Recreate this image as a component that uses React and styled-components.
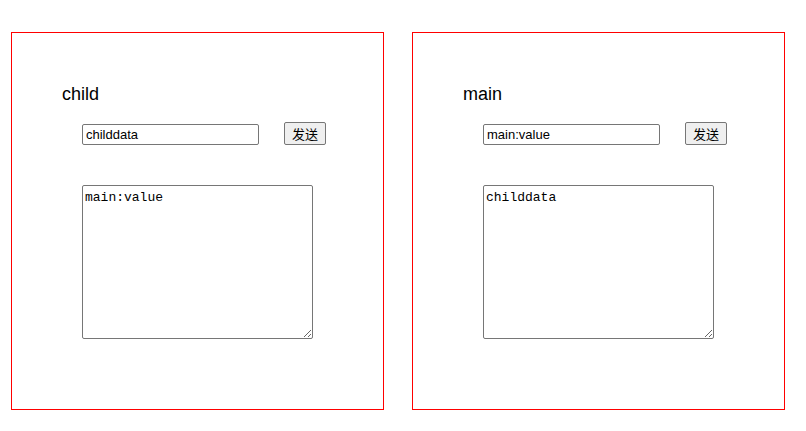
import styled, { createGlobalStyle } from "styled-components";

const GlobalStyle = createGlobalStyle`
  body {
    margin: 0;
    background: #fff;
    font-family: "Liberation Sans", Arial, "Noto Sans CJK SC", sans-serif;
  }
`;

const Page = styled.div`
  display: flex;
  gap: 28px;
  padding: 32px 0 0 11px;
`;

const Panel = styled.section`
  width: 373px;
  height: 378px;
  box-sizing: border-box;
  border: 1px solid #ff0000;
  padding: 50px 0 0 50px;
`;

const Title = styled.h3`
  margin: 0;
  font-size: 18px;
  font-weight: 400;
  line-height: 22px;
  color: #000;
`;

const Row = styled.div`
  display: flex;
  align-items: center;
  gap: 25px;
  height: 24px;
  margin: 16px 0 0 20px;
`;

const TextInput = styled.input`
  width: 177px;
  height: 21px;
  box-sizing: border-box;
  border: 1px solid #767676;
  border-radius: 2px;
  padding: 1px 3px;
  font-family: "Liberation Sans", Arial, sans-serif;
  font-size: 13px;
  color: #000;
  margin-top: 2px;
`;

const SendButton = styled.button`
  width: 42px;
  height: 23px;
  box-sizing: border-box;
  border: 1px solid #767676;
  border-radius: 2px;
  background: #efefef;
  padding: 0;
  font-family: "Noto Sans CJK SC", sans-serif;
  font-size: 13px;
  color: #000;
`;

const Output = styled.textarea`
  display: block;
  width: 231px;
  height: 154px;
  box-sizing: border-box;
  margin: 40px 0 0 20px;
  border: 1px solid #767676;
  border-radius: 2px;
  padding: 4px 2px 2px;
  font-family: "Liberation Mono", "Courier New", monospace;
  font-size: 13px;
  color: #000;
`;

function Frame({ title, value, received }) {
  return (
    <Panel>
      <Title>{title}</Title>
      <Row>
        <TextInput defaultValue={value} />
        <SendButton>发送</SendButton>
      </Row>
      <Output defaultValue={received} />
    </Panel>
  );
}

export default function App() {
  return (
    <>
      <GlobalStyle />
      <Page>
        <Frame title="child" value="childdata" received="main:value" />
        <Frame title="main" value="main:value" received="childdata" />
      </Page>
    </>
  );
}
